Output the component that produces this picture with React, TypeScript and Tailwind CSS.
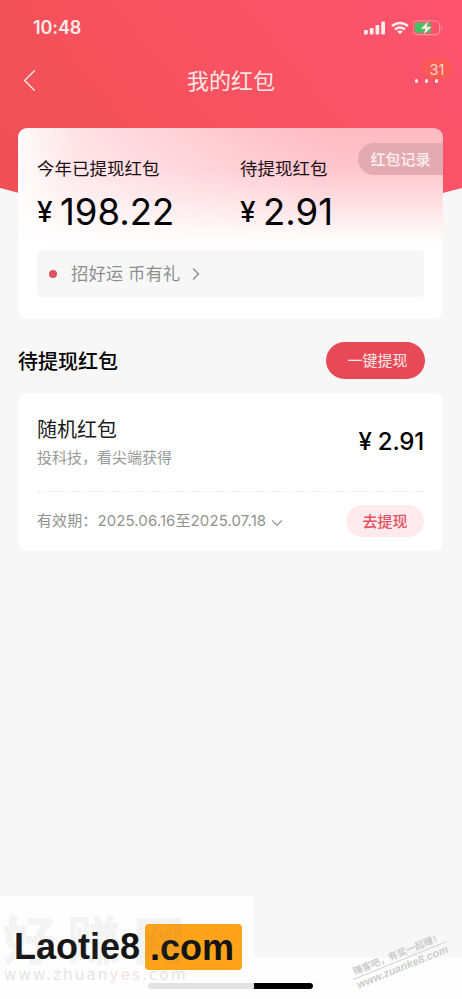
import { ChevronDown, ChevronLeft, ChevronRight } from "lucide-react";

export default function App() {
  return (
    <div className="relative flex h-[999px] w-[462px] flex-col overflow-hidden bg-[#f7f7f7] font-['Inter','Noto_Sans_CJK_SC',sans-serif] text-black">
      {/* Curved header backdrop */}
      <svg className="absolute left-0 top-0" width="462" height="220" viewBox="0 0 462 220">
        <defs>
          <linearGradient id="header" x1="0" y1="0.6" x2="1" y2="0.2">
            <stop offset="0" stopColor="#f05055" />
            <stop offset="0.45" stopColor="#f6525f" />
            <stop offset="1" stopColor="#fd536f" />
          </linearGradient>
        </defs>
        <path d="M0 0H462V188Q231 252 0 188Z" fill="url(#header)" />
      </svg>

      <StatusBar />
      <NavBar />
      <SummaryCard />

      {/* Section title */}
      <div className="relative mx-[18px] mt-[23px] flex h-[37px] items-center justify-between pr-[19px]">
        <h2 className="whitespace-nowrap pt-[4px] text-[20px] font-medium leading-[37px]">待提现红包</h2>
        <button className="h-[37px] w-[99px] rounded-full bg-[#e84957] pl-1 text-[15px] leading-[37px] text-[#ffe9e9]">
          一键提现
        </button>
      </div>

      <PacketCard />
      <Footer />
    </div>
  );
}

function StatusBar() {
  return (
    <div className="relative flex h-[56px] items-center justify-between pl-[33px] pr-[17px] text-[#ffeceb]">
      <span className="text-[18px] font-semibold leading-[56px] tracking-[-0.1px]">10:48</span>
      <div className="flex items-center">
        <svg width="22" height="14" viewBox="0 0 22 14" fill="currentColor">
          <rect x="0" y="9" width="3.8" height="4.5" rx="1" />
          <rect x="5.8" y="7" width="3.8" height="6.5" rx="1" />
          <rect x="11.5" y="4" width="3.8" height="9.5" rx="1" />
          <rect x="17.2" y="0.5" width="3.8" height="13" rx="1" />
        </svg>
        <svg className="ml-[5px]" width="18" height="14" viewBox="0 0 18 14" fill="none" stroke="currentColor" strokeWidth="2.5">
          <path d="M1 5.2C5.5 0.8 12.5 0.8 17 5.2" />
          <path d="M4 8.6C6.8 5.9 11.2 5.9 14 8.6" />
          <path d="M9 13.3L6.2 10.6C7.8 9.2 10.2 9.2 11.8 10.6Z" fill="currentColor" stroke="none" />
        </svg>
        <svg className="ml-[4px]" width="32" height="16" viewBox="0 0 32 16">
          <rect x="0" y="1" width="26.5" height="13.6" rx="4" fill="none" stroke="#ff9298" strokeWidth="1.1" />
          <path d="M28.2 5.6Q30.4 7.8 28.2 10Z" fill="#ff9298" />
          <path d="M4 2.8H18V12.8H4Q1.8 12.8 1.8 10.6V5Q1.8 2.8 4 2.8Z" fill="#3fc463" />
          <path d="M15.3 1L7.6 8.9H12.3L10.6 14.8L18.8 6.8H13.7Z" fill="#fff3f0" stroke="#f6686c" strokeWidth="0.4" />
        </svg>
      </div>
    </div>
  );
}

function NavBar() {
  return (
    <div className="relative flex h-[48px] items-center justify-center text-[#ffe7e5]">
      <ChevronLeft className="absolute left-[10px] top-[5px] h-[39px] w-[39px]" strokeWidth={0.85} />
      <h1 className="pt-[2px] text-[22px] leading-[48px]">我的红包</h1>
      <div className="absolute left-[422px] top-[2px] h-[21px] w-[30px] rounded-full bg-[#fe5a55] text-center text-[14.5px] leading-[23px] text-[#ffd8c8]">
        31
      </div>
      <div className="absolute left-[415px] top-[23px] flex gap-[7px]">
        <i className="h-[4px] w-[3px] rounded-full bg-current" />
        <i className="h-[4px] w-[3px] rounded-full bg-current" />
        <i className="h-[4px] w-[3px] rounded-full bg-current" />
      </div>
    </div>
  );
}

function SummaryCard() {
  return (
    <section className="relative mx-[18px] mt-[24px] flex h-[191px] w-[425px] flex-col overflow-hidden rounded-[9px] bg-white bg-[linear-gradient(to_right,#fffffff0_0%,#ffffff90_14%,#ffffff48_42%,#ffffff00_75%),linear-gradient(180deg,#ffb9c2_0%,#ffc6cd_22%,#ffe3e7_42%,#fffafa_56%,#fff_64%)] px-[19px]">
      <div className="flex pt-[27px]">
        <Amount label="今年已提现红包" value="198.22" />
        <Amount label="待提现红包" value="2.91" />
      </div>
      <button className="absolute right-0 top-[15px] h-[32px] w-[85px] rounded-l-full bg-[#e4aab1] text-[15px] font-medium leading-[33px] text-[#fff0f0]">
        红包记录
      </button>
      <div className="mt-[19px] flex h-[47px] items-center rounded-[4px] bg-[#f7f7f7] pl-[12px] text-[17.4px] text-[#8f8f8f]">
        <i className="mr-[14px] h-[8px] w-[8px] rounded-full bg-[#e25362]" />
        <span className="whitespace-nowrap pt-[2px]">招好运 币有礼</span>
        <ChevronRight className="ml-[6px] h-[20px] w-[20px]" strokeWidth={1.7} />
      </div>
    </section>
  );
}

function Amount({ label, value }: { label: string; value: string }) {
  return (
    <div className="w-[203px] shrink-0">
      <p className="whitespace-nowrap text-[17.5px] leading-[27px] text-[#1c1012]">{label}</p>
      <p className="relative top-[4px] mt-[4px] flex h-[45px] items-baseline whitespace-nowrap leading-[45px]">
        <span className="relative -top-[3px] w-[23px] text-[28px] font-medium">¥</span>
        <span className="text-[36.5px]">{value}</span>
      </p>
    </div>
  );
}

function PacketCard() {
  return (
    <section className="relative mx-[18px] mt-[14px] h-[158px] w-[425px] rounded-[9px] bg-white px-[19px]">
      <div className="flex h-[99px] items-center justify-between border-b border-dashed border-[#ececec]">
        <div className="whitespace-nowrap pt-[2px]">
          <h3 className="text-[20px] leading-[30px] text-[#1a1a1a]">随机红包</h3>
          <p className="text-[15px] leading-[26px] text-[#999]">投科技，看尖端获得</p>
        </div>
        <span className="text-[24px] font-medium tracking-[-0.2px]">¥ 2.91</span>
      </div>
      <div className="flex h-[58px] items-center">
        <span className="whitespace-nowrap pt-px text-[15px] tracking-[0.1px] text-[#929292]">有效期：2025.06.16至2025.07.18</span>
        <ChevronDown className="ml-[2px] mt-[3px] h-[18px] w-[18px] text-[#999]" strokeWidth={1.6} />
        <button className="ml-auto h-[32px] w-[78px] rounded-full bg-[#ffebed] text-[15px] font-medium leading-[33px] text-[#e65060]">
          去提现
        </button>
      </div>
    </section>
  );
}

function Footer() {
  return (
    <footer className="relative mt-auto h-[103px]">
      <div className="absolute inset-x-0 bottom-0 h-[42px] bg-[#fefefe]" />
      <div className="absolute left-[148px] top-[87px] h-[6px] w-[165px] rounded-full bg-black" />

      {/* Site banner */}
      <div className="absolute left-0 top-0 h-[103px] w-[254px] overflow-hidden bg-[#fefefe]">
        <div className="absolute left-[148px] top-[87px] h-[6px] w-[120px] rounded-full bg-[#e2e2e2]" />
        <div className="flex items-center pl-[14px] pt-[27px] font-['Liberation_Sans',sans-serif] text-[36px] font-bold leading-[47px] text-[#141414]">
          <span className="w-[131px] whitespace-nowrap">Laotie8</span>
          <span className="h-[46px] w-[97px] rounded-[4px] bg-[#ffa31a] pl-[5px]">.com</span>
        </div>
        <div className="absolute left-[3px] top-[16px] whitespace-nowrap text-[52px] font-black leading-[60px] tracking-[13px] text-[#777]/8">
          好赚网
        </div>
        <div className="absolute left-[4px] top-[69px] whitespace-nowrap font-['DejaVu_Sans',sans-serif] text-[15px] leading-[20px] tracking-[2.2px] text-[#e4e4e4]">
          www.zhuan<span className="text-[#f8e2de]">yes</span>.com
        </div>
      </div>

      {/* Slanted stamp */}
      <div className="absolute left-[350px] top-[51px] w-[100px] -rotate-[22deg] whitespace-nowrap text-center font-bold text-[#cdcdcd]">
        <p className="border-b border-[#d4d4d4] text-[9.5px] leading-[13px]">赚客吧，有奖一起赚！</p>
        <p className="font-['Liberation_Sans',sans-serif] text-[11px] italic leading-[13px]">www.zuanke8.com</p>
      </div>
    </footer>
  );
}
